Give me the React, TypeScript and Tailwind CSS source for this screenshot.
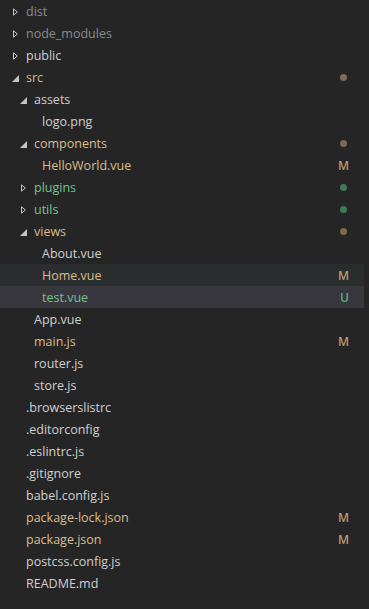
import React from "react";

type Row = {
    name: string;
    level: number;
    kind: "file" | "open" | "closed";
    color: string;
    badge?: "M" | "U" | "dot-m" | "dot-u";
    state?: "hover" | "selected";
};

const GRAY = "text-[#8c8c8c]";
const WHITE = "text-[#d0d0d0]";
const MOD = "text-[#dbbd8b]";
const NEW = "text-[#73c48f]";

const rows: Row[] = [
    { name: "dist", level: 0, kind: "closed", color: GRAY },
    { name: "node_modules", level: 0, kind: "closed", color: GRAY },
    { name: "public", level: 0, kind: "closed", color: WHITE },
    { name: "src", level: 0, kind: "open", color: MOD, badge: "dot-m" },
    { name: "assets", level: 1, kind: "open", color: WHITE },
    { name: "logo.png", level: 2, kind: "file", color: WHITE },
    { name: "components", level: 1, kind: "open", color: MOD, badge: "dot-m" },
    { name: "HelloWorld.vue", level: 2, kind: "file", color: MOD, badge: "M" },
    { name: "plugins", level: 1, kind: "closed", color: NEW, badge: "dot-u" },
    { name: "utils", level: 1, kind: "closed", color: NEW, badge: "dot-u" },
    { name: "views", level: 1, kind: "open", color: MOD, badge: "dot-m" },
    { name: "About.vue", level: 2, kind: "file", color: WHITE },
    { name: "Home.vue", level: 2, kind: "file", color: MOD, badge: "M", state: "hover" },
    { name: "test.vue", level: 2, kind: "file", color: NEW, badge: "U", state: "selected" },
    { name: "App.vue", level: 1, kind: "file", color: WHITE },
    { name: "main.js", level: 1, kind: "file", color: MOD, badge: "M" },
    { name: "router.js", level: 1, kind: "file", color: WHITE },
    { name: "store.js", level: 1, kind: "file", color: WHITE },
    { name: ".browserslistrc", level: 0, kind: "file", color: WHITE },
    { name: ".editorconfig", level: 0, kind: "file", color: WHITE },
    { name: ".eslintrc.js", level: 0, kind: "file", color: WHITE },
    { name: ".gitignore", level: 0, kind: "file", color: WHITE },
    { name: "babel.config.js", level: 0, kind: "file", color: WHITE },
    { name: "package-lock.json", level: 0, kind: "file", color: MOD, badge: "M" },
    { name: "package.json", level: 0, kind: "file", color: MOD, badge: "M" },
    { name: "postcss.config.js", level: 0, kind: "file", color: WHITE },
    { name: "README.md", level: 0, kind: "file", color: WHITE },
];

const indent = ["pl-[26px]", "pl-[34px]", "pl-[42px]"];
const twisty = ["left-[12px]", "left-[20px]", "left-[28px]"];

const Twisty = ({ open }: { open: boolean }) =>
    open ? (
        <svg width="7" height="7" viewBox="0 0 7 7" className="block">
            <path d="M7 0 L7 7 L0 7 Z" fill="#c5c5c5" />
        </svg>
    ) : (
        <svg width="5" height="8" viewBox="0 0 5 8" className="block">
            <path d="M0.5 0.8 L4.3 4 L0.5 7.2 Z" fill="none" stroke="#c5c5c5" strokeWidth="1" />
        </svg>
    );

const Badge = ({ badge }: { badge?: Row["badge"] }) => {
    if (!badge) return null;
    if (badge === "dot-m") return <span className="w-[7px] h-[7px] rounded-full bg-[#7d6b53] mr-[4px] mt-[1px]" />;
    if (badge === "dot-u") return <span className="w-[7px] h-[7px] rounded-full bg-[#3f7a52] mr-[4px] mt-[1px]" />;
    return (
        <span
            className={`text-[12px] leading-[22px] font-semibold mr-[2px] pt-[1px] ${badge === "M" ? "text-[#b89c6e]" : "text-[#5fae7c]"}`}
        >
            {badge}
        </span>
    );
};

export default function App() {
    return (
        <div
            className="w-[369px] h-[609px] bg-[#252526] flex overflow-hidden"
            style={{ fontFamily: '"Open Sans", "Noto Sans", sans-serif' }}
        >
            <div className="w-[364px]">
                {rows.map((r) => (
                    <div
                        key={r.name}
                        className={`relative h-[22px] flex items-center pr-[13px] ${indent[r.level]} ${
                            r.state === "selected"
                                ? "bg-[#37373d]"
                                : r.state === "hover"
                                  ? "bg-[#2a2d2e]"
                                  : ""
                        }`}
                    >
                        {r.kind !== "file" && (
                            <span className={`absolute top-[1px] h-[22px] flex items-center ${twisty[r.level]} ${r.kind === "closed" ? "pl-[1px]" : ""}`}>
                                <Twisty open={r.kind === "open"} />
                            </span>
                        )}
                        <span className={`flex-1 text-[12.5px] leading-[22px] pt-[1px] whitespace-nowrap ${r.color}`}>
                            {r.name}
                        </span>
                        <Badge badge={r.badge} />
                    </div>
                ))}
            </div>
            <div className="w-[5px] bg-[#252526]" />
        </div>
    );
}
